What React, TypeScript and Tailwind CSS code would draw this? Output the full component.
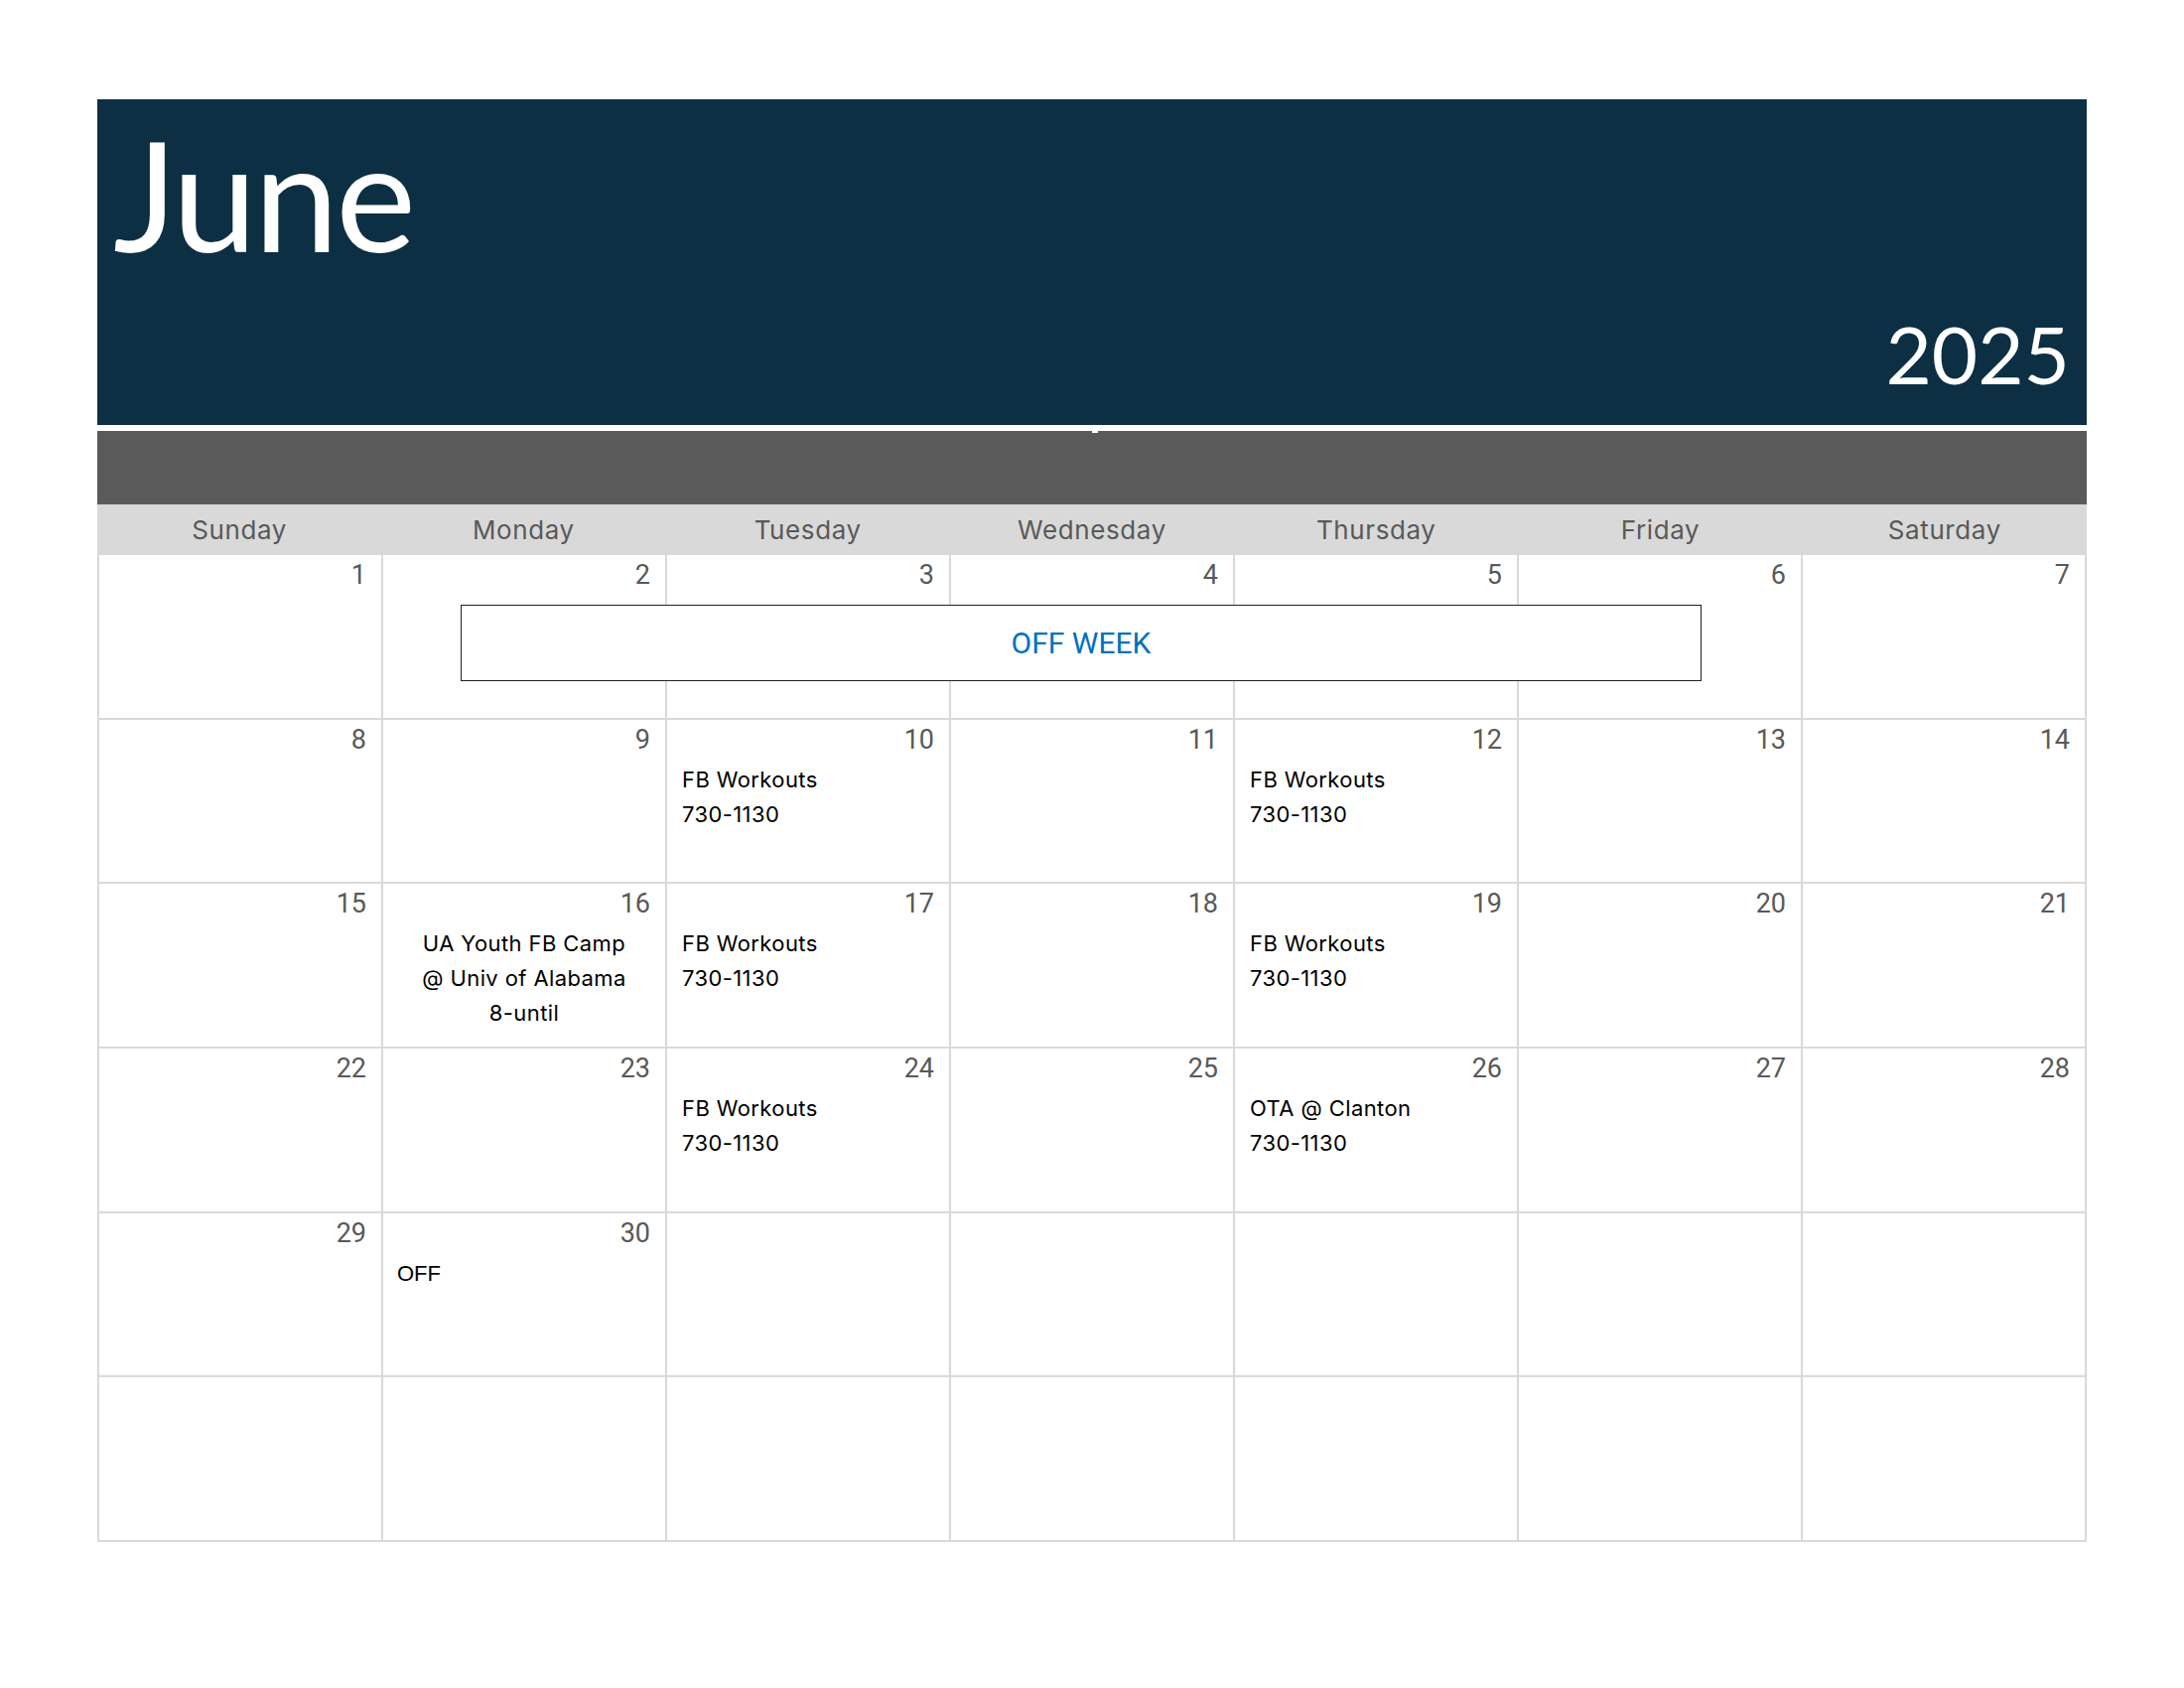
import React from "react";

type Cell = {
  day?: number;
  lines?: string[];
  center?: boolean;
  arial?: boolean;
};

const days = ["Sunday", "Monday", "Tuesday", "Wednesday", "Thursday", "Friday", "Saturday"];

const workout = ["FB Workouts", "730-1130"];

const events: Record<number, Cell> = {
  10: { lines: workout },
  12: { lines: workout },
  16: { lines: ["UA Youth FB Camp", "@ Univ of Alabama", "8-until"], center: true },
  17: { lines: workout },
  19: { lines: workout },
  24: { lines: workout },
  26: { lines: ["OTA @ Clanton", "730-1130"] },
  30: { lines: ["OFF"], arial: true },
};

const cells: Cell[] = Array.from({ length: 42 }, (_, i) => {
  const day = i + 1;
  if (day > 30) return {};
  return { day, ...events[day] };
});

const DayCell = ({ cell }: { cell: Cell }) => (
  <div className="flex flex-col bg-white">
    {cell.day && (
      <div className="pr-[15px] pt-[4px] text-right font-['Roboto'] text-[27px] leading-[32px] text-[#595959]">
        {cell.day}
      </div>
    )}
    {cell.lines && (
      <div
        className={
          cell.arial
            ? "mt-[7px] pl-[14px] font-['Liberation_Sans'] text-[22px] leading-[35px] text-black"
            : cell.center
              ? "mt-[7px] text-center font-['Inter'] text-[22px] leading-[35px] tracking-[0.4px] text-black"
              : "mt-[7px] pl-[15px] font-['Inter'] text-[22px] leading-[35px] tracking-[0.4px] text-black"
        }
      >
        {cell.lines.map((l) => (
          <div key={l}>{l}</div>
        ))}
      </div>
    )}
  </div>
);

export default function App() {
  return (
    <div className="h-[1700px] w-[2200px] bg-white pl-[98px] pt-[100px]">
      <div className="w-[2004px]">
        <div className="flex h-[328px] flex-col justify-between bg-[#0c2f43] font-['Lato',sans-serif] text-white">
          <div className="pl-[16px] pt-[19px] text-[153px] leading-none tracking-[-3px]">June</div>
          <div className="pb-[32px] pr-[17px] text-right text-[80px] leading-none">2025</div>
        </div>
        <div className="relative mt-[6px] h-[74px] bg-[#5a5a5a]">
          <div className="absolute left-[1002px] top-0 h-[2px] w-[6px] bg-white" />
        </div>
        <div className="grid h-[51px] grid-cols-7 bg-[#d9d9d9] font-['Inter',sans-serif] text-[26px] text-[#595959]">
          {days.map((d) => (
            <div key={d} className="flex items-center justify-center tracking-[0.6px]">
              {d}
            </div>
          ))}
        </div>
        <div className="relative grid h-[994px] grid-cols-7 grid-rows-6 gap-[2px] bg-[#d9d9d9] px-[2px] pb-[2px]">
          {cells.map((c, i) => (
            <DayCell key={i} cell={c} />
          ))}
          <div className="absolute left-[366px] top-[50px] flex h-[77px] w-[1250px] items-center justify-center border border-[#222] bg-white font-['Roboto',sans-serif] text-[30px] text-[#0070c0]">
            OFF WEEK
          </div>
        </div>
      </div>
    </div>
  );
}
